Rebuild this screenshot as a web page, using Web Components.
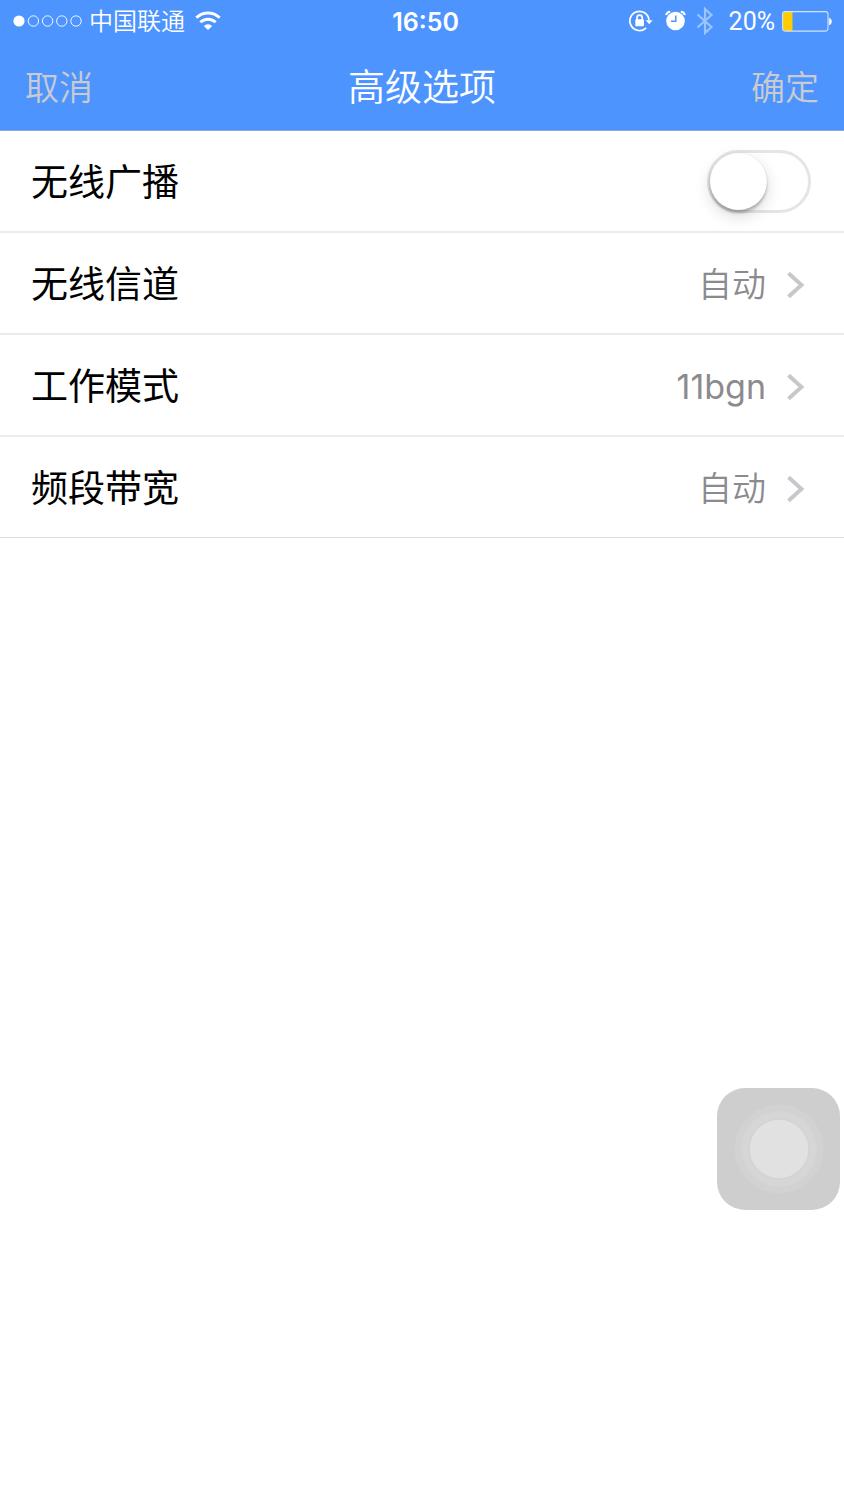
<!DOCTYPE html>
<html lang="zh-CN">
<head>
<meta charset="utf-8">
<meta name="viewport" content="width=device-width, initial-scale=1">
<title>高级选项</title>
<style>
  html, body { margin: 0; background: #fff; }
  body { font-family: Inter, "Noto Sans CJK SC", sans-serif; color: #000; }
</style>
</head>
<body>
<settings-page></settings-page>

<script>
const define = (name, html, setup) => {
  const template = document.createElement('template');
  template.innerHTML = html;
  customElements.define(name, class extends HTMLElement {
    constructor() {
      super();
      this.attachShadow({ mode: 'open' }).append(template.content.cloneNode(true));
    }
    connectedCallback() { if (setup) setup(this, this.shadowRoot); }
  });
};

define('signal-strength', `
  <style>
    :host { display: block; width: 70px; height: 14px; }
    svg { display: block; }
  </style>
  <svg width="70" height="14" viewBox="0 0 70 14" fill="none" stroke="#fff" aria-hidden="true">
    <circle cx="6" cy="7" r="5.6" fill="#fff" stroke="none"/>
    <circle cx="20.4" cy="7" r="5.2" stroke-width=".9"/>
    <circle cx="34.6" cy="7" r="5.2" stroke-width=".9"/>
    <circle cx="48.8" cy="7" r="5.2" stroke-width=".9"/>
    <circle cx="63" cy="7" r="5.2" stroke-width=".9"/>
  </svg>
`);

define('battery-level', `
  <style>
    :host { display: block; width: 50px; height: 21px; }
    svg { display: block; }
  </style>
  <svg width="50" height="21" viewBox="0 0 50 21" aria-hidden="true">
    <path d="M3.5 1H10.500V20H3.500Q1 20 1 17.500V3.500Q1 1 3.500 1Z" fill="#fc0"/>
    <rect x=".6" y=".6" width="45.400" height="19.500" rx="2.500" fill="none" stroke="#d3e2f4" stroke-width="1.100"/>
    <path d="M47.300 7V14Q49.600 12.800 49.600 10.500T47.300 7Z" fill="#fff" stroke="#fff" stroke-width=".5"/>
  </svg>
`);

define('status-bar', `
  <style>
    :host { display: grid; grid-template-columns: 1fr auto 1fr; align-items: center;
            height: 42px; padding: 0 12px 0 13px; color: #fff; font-size: 24px; line-height: 32px; }
    .side { display: flex; align-items: center; }
    .end { justify-content: flex-end; }
    .carrier { margin: 0 10px 0 6px; padding-top: 2px; font-weight: 350; }
    time { padding: 2px 0 0 6px; font-size: 25px; font-weight: 600; }
    .percent { padding-top: 2px; font-family: Roboto, sans-serif; font-size: 25px; }
    svg { display: block; flex: none; }
    .lock { margin-right: 12px; }
    .alarm { margin-right: 10px; }
    .bluetooth { margin-right: 15px; opacity: .45; }
    battery-level { margin-left: 7px; }
  </style>
  <div class="side">
    <signal-strength></signal-strength>
    <span class="carrier">中国联通</span>
    <svg width="26" height="20" viewBox="0 0 26 20" fill="none" stroke="#fff" stroke-width="2.900" aria-hidden="true">
      <path d="M1.300 6.800Q6.300 2 13 2T24.700 6.800"/>
      <path d="M5.300 11.300Q8.500 8.200 13 8.200T20.700 11.300"/>
      <path d="M13 19L8.800 14.900Q10.600 13.300 13 13.300T17.200 14.900Z" fill="#fff" stroke="none"/>
    </svg>
  </div>
  <time datetime="16:50">16:50</time>
  <div class="side end">
    <svg class="lock" width="24" height="22" viewBox="0 0 24 22" fill="none" stroke="#fff" stroke-width="1.700" aria-hidden="true">
      <path d="M17.200 17.800A9.600 9.600 0 1 1 20 9.800"/>
      <path d="M16.700 10.300H23.600L20.200 14.300Z" fill="#fff" stroke="none"/>
      <rect x="6.300" y="9.300" width="8.600" height="6.900" rx=".8" fill="#fff" stroke="none"/>
      <path d="M8 10V7.700A2.600 2.600 0 0 1 13.200 7.700V10"/>
    </svg>
    <svg class="alarm" width="21" height="22" viewBox="0 0 21 22" fill="none" stroke="#fff" aria-hidden="true">
      <circle cx="10.500" cy="11" r="9.300" fill="#fff" stroke="none"/>
      <path d="M1.200 5.200Q1.600 2 5.200 1.800M19.800 5.200Q19.400 2 15.800 1.800" stroke-width="2"/>
      <path d="M10.800 5.500V11.300H6" stroke="#4d94ff" stroke-width="1.500"/>
    </svg>
    <svg class="bluetooth" width="18" height="28" viewBox="0 0 18 28" fill="none" stroke="#fff" stroke-width="2.200" aria-hidden="true">
      <path d="M1.500 7.500L15.500 20L9 26V2L15.500 8L1.500 20.500"/>
    </svg>
    <span class="percent">20%</span>
    <battery-level></battery-level>
  </div>
`);

define('nav-bar', `
  <style>
    :host { display: grid; grid-template-columns: 1fr auto 1fr; align-items: center;
            height: 84px; padding: 4px 25px 0; border-bottom: 1px solid #7fa9e2; color: #fff; }
    h1 { margin: 0; font-size: 37px; line-height: 48px; font-weight: 350; }
  </style>
  <slot name="start"></slot>
  <h1><slot></slot></h1>
  <slot name="end"></slot>
`);

define('nav-action', `
  <style>
    :host { display: block; }
    :host([slot="end"]) { justify-self: end; }
    button { display: block; margin: 0; padding: 0; border: 0; background: none; color: #c9cbd0;
             font: inherit; font-size: 34px; line-height: 48px; font-weight: 350; cursor: pointer; }
  </style>
  <button type="button"><slot></slot></button>
`);

define('option-row', `
  <style>
    :host { display: block; border-bottom: 2px solid #ebebec; }
    :host(:last-of-type) { border-bottom-width: 1px; border-color: #dedee0; }
    button { display: flex; align-items: center; width: 100%; height: 100px; margin: 0;
             padding: 4px 39px 0 31px; border: 0; background: none; font: inherit; color: inherit;
             text-align: left; cursor: pointer; }
    .name { flex: 1; font-size: 37px; line-height: 48px; }
    .value { margin-right: 20px; font-size: 34px; line-height: 48px; color: #8b8b8f; font-weight: 350; }
    .latin { font-weight: 400; }
    svg { display: block; flex: none; }
  </style>
  <button type="button">
    <span class="name"><slot></slot></span>
    <span class="value"></span>
    <svg width="19" height="28" viewBox="0 0 19 28" fill="none" stroke="#c7c7cc" stroke-width="3.900" aria-hidden="true">
      <path d="M2.500 2.200L15.500 14L2.500 25.800"/>
    </svg>
  </button>
`, (host, root) => {
  const value = root.querySelector('.value');
  value.textContent = host.getAttribute('value');
  value.classList.toggle('latin', /^[\x20-\x7e]+$/.test(value.textContent));
});

define('switch-row', `
  <style>
    :host { display: block; border-bottom: 2px solid #ebebec; }
    label { display: flex; align-items: center; height: 100px; padding: 0 33px 0 31px; cursor: pointer; }
    .name { flex: 1; padding-top: 4px; font-size: 37px; line-height: 48px; }
    input { appearance: none; flex: none; display: flex; align-items: center; box-sizing: border-box;
            width: 104px; height: 63px; margin: 0; padding: 0; border: 3px solid #e5e5e5;
            border-radius: 32px; background: #fff; cursor: pointer; }
    input::before { content: ""; width: 57px; height: 57px; border-radius: 50%; background: #fff;
                    box-shadow: 0 3px 3px rgba(0,0,0,.24), 0 6px 16px rgba(0,0,0,.15), 0 0 1px rgba(0,0,0,.12); }
    input:checked { justify-content: flex-end; background: #4cd964; border-color: #4cd964; }
  </style>
  <label><span class="name"><slot></slot></span><input type="checkbox" role="switch"></label>
`);

define('assistive-touch', `
  <style>
    :host { display: block; position: fixed; right: 4px; bottom: 290px; }
    button { display: block; margin: 0; padding: 0; border: 0; border-radius: 28px;
             background: #cecece; width: 123px; height: 122px; cursor: pointer; }
    svg { display: block; margin: 0 auto; }
  </style>
  <button type="button" aria-label="辅助触控">
    <svg width="90" height="90" viewBox="0 0 90 90" aria-hidden="true">
      <circle cx="45" cy="45" r="44.500" fill="#d2d2d2"/>
      <circle cx="45" cy="45" r="37.500" fill="#d6d6d6"/>
      <circle cx="45" cy="45" r="30.500" fill="#d2d2d2"/>
      <circle cx="45" cy="45" r="29.300" fill="#e1e1e1"/>
    </svg>
  </button>
`);

define('settings-page', `
  <style>
    :host { display: block; min-height: 100vh; background: #fff; }
    header { background: #4d94ff; }
    main { display: block; }
  </style>
  <header>
    <status-bar></status-bar>
    <nav-bar>
      <nav-action slot="start">取消</nav-action>
      高级选项
      <nav-action slot="end">确定</nav-action>
    </nav-bar>
  </header>
  <main>
    <switch-row>无线广播</switch-row>
    <option-row value="自动">无线信道</option-row>
    <option-row value="11bgn">工作模式</option-row>
    <option-row value="自动">频段带宽</option-row>
  </main>
  <assistive-touch></assistive-touch>
`);
</script>
</body>
</html>
